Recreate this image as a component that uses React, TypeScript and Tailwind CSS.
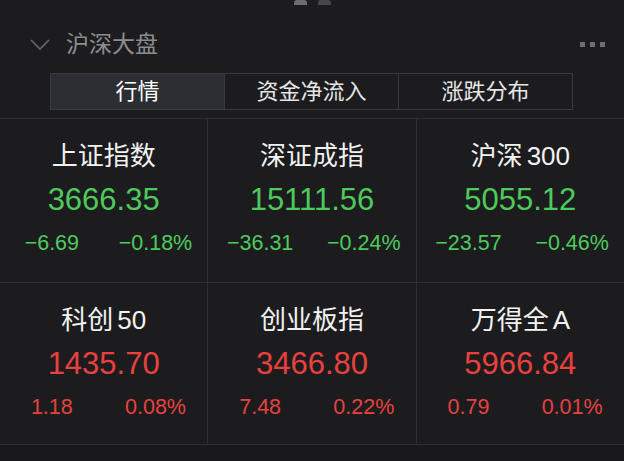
import React from "react";

type Index = {
    name: string,
    suffix?: string,
    price: string,
    change: string,
    pct: string,
    up: boolean
}

const indices: Index[] = [
    { name: "上证指数", price: "3666.35", change: "−6.69", pct: "−0.18%", up: false },
    { name: "深证成指", price: "15111.56", change: "−36.31", pct: "−0.24%", up: false },
    { name: "沪深", suffix: "300", price: "5055.12", change: "−23.57", pct: "−0.46%", up: false },
    { name: "科创", suffix: "50", price: "1435.70", change: "1.18", pct: "0.08%", up: true },
    { name: "创业板指", price: "3466.80", change: "7.48", pct: "0.22%", up: true },
    { name: "万得全", suffix: "A", price: "5966.84", change: "0.79", pct: "0.01%", up: true },
];

const tabs = ["行情", "资金净流入", "涨跌分布"];

function IndexCard({ item }: { item: Index }) {
    const color = item.up ? "text-[#e8413f]" : "text-[#4ccb5c]";
    return (
        <div className="bg-[#1c1c1e] flex flex-col items-center pt-[22px]">
            <div className="text-[26px] leading-[30px] text-[#f2f2f2]">
                {item.name}
                {item.suffix && <span className="ml-[4px]">{item.suffix}</span>}
            </div>
            <div className={`mt-[12px] text-[31px] leading-[34px] ${color}`}>{item.price}</div>
            <div className={`mt-[14px] grid grid-cols-2 w-full text-center text-[21.5px] leading-[24px] ${color}`}>
                <span>{item.change}</span>
                <span>{item.pct}</span>
            </div>
        </div>
    );
}

export default function App() {
    return (
        <div
            className="w-full h-[461px] bg-[#1c1c1e] overflow-hidden flex flex-col"
            style={{ fontFamily: '"Liberation Sans", "Noto Sans CJK SC", sans-serif' }}
        >
            <div className="flex justify-center gap-[11px] h-[5px]">
                <div className="w-[13px] h-[5px] rounded-t-[3px] bg-[#6d6d70]"></div>
                <div className="w-[13px] h-[5px] rounded-t-[3px] bg-[#47474a]"></div>
            </div>

            <header className="flex items-center h-[28px] mt-[25px] pl-[30px] pr-[19px]">
                <svg width="20" height="11" viewBox="0 0 20 11" className="shrink-0">
                    <path d="M1 1 L10 10 L19 1" fill="none" stroke="#6a6a6e" strokeWidth="1.6" />
                </svg>
                <h1 className="ml-[16px] text-[23px] leading-[28px] text-[#8c8c90]">沪深大盘</h1>
                <div className="ml-auto flex gap-[5px]">
                    <span className="w-[5px] h-[5px] bg-[#6f6f72]"></span>
                    <span className="w-[5px] h-[5px] bg-[#6f6f72]"></span>
                    <span className="w-[5px] h-[5px] bg-[#6f6f72]"></span>
                </div>
            </header>

            <div className="mt-[15px] ml-[50px] w-[523px] h-[37px] flex border border-[#3a3a3d]">
                {tabs.map((t, i) => (
                    <div
                        key={t}
                        className={`flex-1 flex items-center justify-center text-[22px] leading-[26px] ${i > 0 ? "border-l border-[#3a3a3d]" : ""} ${i === 0 ? "bg-[#2b2f33] text-white" : "text-[#e6e6e6]"}`}
                    >
                        {t}
                    </div>
                ))}
            </div>

            <div className="mt-[8px] grid grid-cols-3 grid-rows-[163px_161px] gap-px bg-[#2e2e31] border-y border-[#2e2e31]">
                {indices.map(item => (
                    <IndexCard key={item.name} item={item} />
                ))}
            </div>

            <div className="flex-1 bg-[#19191b]"></div>
        </div>
    );
}
